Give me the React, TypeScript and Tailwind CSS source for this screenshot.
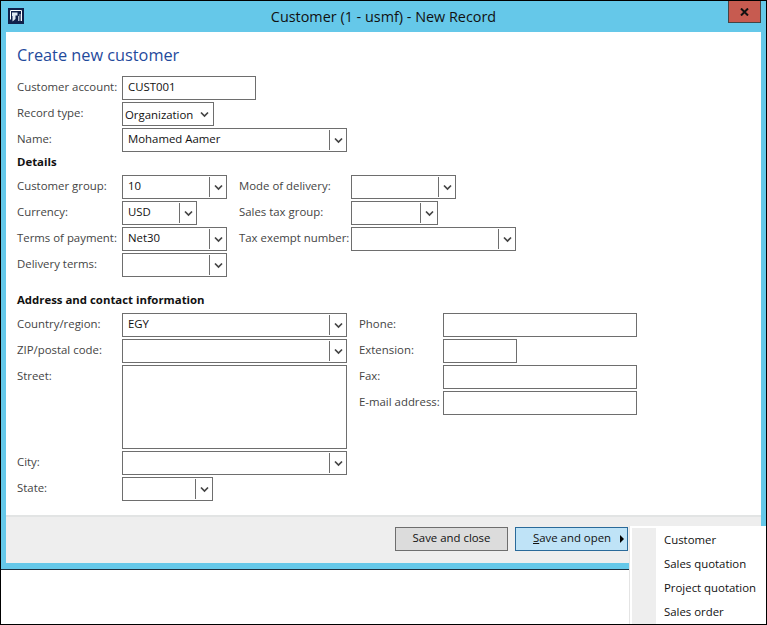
const FONT = "font-['Open_Sans','Noto_Sans',sans-serif]"

function Chevron() {
  return (
    <svg width="9" height="7" viewBox="0 0 9 7" className="block">
      <path d="M1 1.5 L4.5 5 L8 1.5" fill="none" stroke="#444" strokeWidth="1.7" />
    </svg>
  )
}

function Input({ w, value = '' }: { w: string; value?: string }) {
  return (
    <div className={`${w} h-6 border border-[#6e6e6e] bg-white pl-[5px] pb-[2px] flex items-center text-[#111] shrink-0`}>
      {value}
    </div>
  )
}

function Combo({ w, value = '' }: { w: string; value?: string }) {
  return (
    <div className={`${w} h-6 border border-[#6e6e6e] bg-white flex items-center text-[#111] shrink-0`}>
      <div className="flex-1 pl-[5px] pb-[2px]">{value}</div>
      <div className="w-[17px] h-5 border-l border-[#6e6e6e] flex items-center justify-center">
        <Chevron />
      </div>
    </div>
  )
}

function Row({ label, labelW, children }: { label: string; labelW: string; children: React.ReactNode }) {
  return (
    <div className="flex items-start">
      <div className={`${labelW} shrink-0 text-[#444] leading-[22px] whitespace-nowrap`}>{label}</div>
      {children}
    </div>
  )
}

function WindowIcon() {
  return (
    <svg width="16" height="16" viewBox="0 0 16 16" className="block">
      <rect width="16" height="16" fill="#10204a" />
      <path d="M2.5 11.5V2.5H13.5V13" fill="none" stroke="#fff" strokeWidth="1" />
      <path d="M4 4.5H9.5V7.5H7.5V11L4.5 13.5V8H4z" fill="#dfe8f2" />
      <path d="M10.5 8v5M12 6v7" stroke="#aeb9c9" strokeWidth="1" />
    </svg>
  )
}

export default function App() {
  return (
    <div className={`${FONT} relative w-[767px] h-[625px] overflow-hidden bg-white text-[11.4px] border border-black`}>
      {/* window */}
      <div className="bg-[#65c8e9] border-b border-[#1d3040] h-[569px] flex flex-col pl-[5px] pr-[5px] pb-[6px]">
        <div className="h-[31px] -mx-[5px] flex items-center relative shrink-0">
          <div className="ml-[7px] mb-[1px]"><WindowIcon /></div>
          <div className="absolute inset-x-0 top-[6px] text-center text-[14.4px] leading-5 text-[#111]">
            Customer (1 - usmf) - New Record
          </div>
          <div className="absolute right-[5px] top-0 w-[33px] h-[22px] bg-[#c75b50] border border-[#444] border-t-0 flex items-center justify-center">
            <svg width="9" height="8" viewBox="0 0 9 8">
              <path d="M1 0.5 L8 7.5 M8 0.5 L1 7.5" stroke="#111" strokeWidth="2" />
            </svg>
          </div>
        </div>

        <div className="flex-1 bg-white flex flex-col min-h-0">
          <div className="flex-1 px-[11px] pt-[10px] border-b-2 border-[#e2e4e4]">
            <div className="text-[16.3px] leading-[26px] text-[#1f4a9c] mb-[8px]">Create new customer</div>

            <div className="flex flex-col gap-[2px]">
              <Row label="Customer account:" labelW="w-[105px]"><Input w="w-[134px]" value="CUST001" /></Row>
              <Row label="Record type:" labelW="w-[105px]">
                <div className="w-[92px] h-6 border border-[#6e6e6e] flex items-center justify-between pl-[2px] pr-[4px] pt-[1px] text-[#111]">
                  Organization <Chevron />
                </div>
              </Row>
              <Row label="Name:" labelW="w-[105px]"><Combo w="w-[225px]" value="Mohamed Aamer" /></Row>
            </div>

            <div className="font-bold text-[#111] leading-[18px] mt-[1px] mb-[4px]">Details</div>
            <div className="flex">
              <div className="w-[222px] flex flex-col gap-[2px]">
                <Row label="Customer group:" labelW="w-[105px]"><Combo w="w-[105px]" value="10" /></Row>
                <Row label="Currency:" labelW="w-[105px]"><Combo w="w-[75px]" value="USD" /></Row>
                <Row label="Terms of payment:" labelW="w-[105px]"><Combo w="w-[105px]" value="Net30" /></Row>
                <Row label="Delivery terms:" labelW="w-[105px]"><Combo w="w-[105px]" /></Row>
              </div>
              <div className="flex flex-col gap-[2px]">
                <Row label="Mode of delivery:" labelW="w-[112px]"><Combo w="w-[105px]" /></Row>
                <Row label="Sales tax group:" labelW="w-[112px]"><Combo w="w-[87px]" /></Row>
                <Row label="Tax exempt number:" labelW="w-[112px]"><Combo w="w-[165px]" /></Row>
              </div>
            </div>

            <div className="font-bold text-[#111] leading-[18px] mt-[14px] mb-[4px]">Address and contact information</div>
            <div className="flex">
              <div className="w-[342px] flex flex-col gap-[2px]">
                <Row label="Country/region:" labelW="w-[105px]"><Combo w="w-[225px]" value="EGY" /></Row>
                <Row label="ZIP/postal code:" labelW="w-[105px]"><Combo w="w-[225px]" /></Row>
                <Row label="Street:" labelW="w-[105px]">
                  <div className="w-[225px] h-[84px] border border-[#6e6e6e]" />
                </Row>
                <Row label="City:" labelW="w-[105px]"><Combo w="w-[225px]" /></Row>
                <Row label="State:" labelW="w-[105px]"><Combo w="w-[91px]" /></Row>
              </div>
              <div className="flex flex-col gap-[2px]">
                <Row label="Phone:" labelW="w-[84px]"><Input w="w-[194px]" /></Row>
                <Row label="Extension:" labelW="w-[84px]"><Input w="w-[74px]" /></Row>
                <Row label="Fax:" labelW="w-[84px]"><Input w="w-[194px]" /></Row>
                <Row label="E-mail address:" labelW="w-[84px]"><Input w="w-[194px]" /></Row>
              </div>
            </div>
          </div>

          <div className="h-[46px] bg-[#eeeeee] flex pt-[10px] pl-[389px] gap-[7px] shrink-0">
            <div className="w-[113px] h-6 bg-[#dcdcdc] border border-[#6e6e6e] flex items-center justify-center pb-[2px] text-[#111]">
              Save and close
            </div>
            <div className="w-[113px] h-6 bg-[#bfe3f7] border border-[#2a6a9a] flex items-center pl-[17px] pb-[2px] text-[#111] relative">
              <span><span className="underline">S</span>ave and open</span>
              <span className="absolute right-[3px] top-[7px] w-0 h-0 border-y-[4px] border-y-transparent border-l-[4px] border-l-black" />
            </div>
          </div>
        </div>
      </div>

      {/* submenu */}
      <div className="absolute left-[628px] top-[525px] -right-px bottom-0 bg-white border-l border-[#e4e4e4] flex pl-[2px] pt-[2px]">
        <div className="w-[24px] bg-[#eeeeee] shrink-0" />
        <div className="pl-[8px] text-[#111] leading-6 whitespace-nowrap">
          <div>Customer</div>
          <div>Sales quotation</div>
          <div>Project quotation</div>
          <div>Sales order</div>
        </div>
      </div>
    </div>
  )
}
